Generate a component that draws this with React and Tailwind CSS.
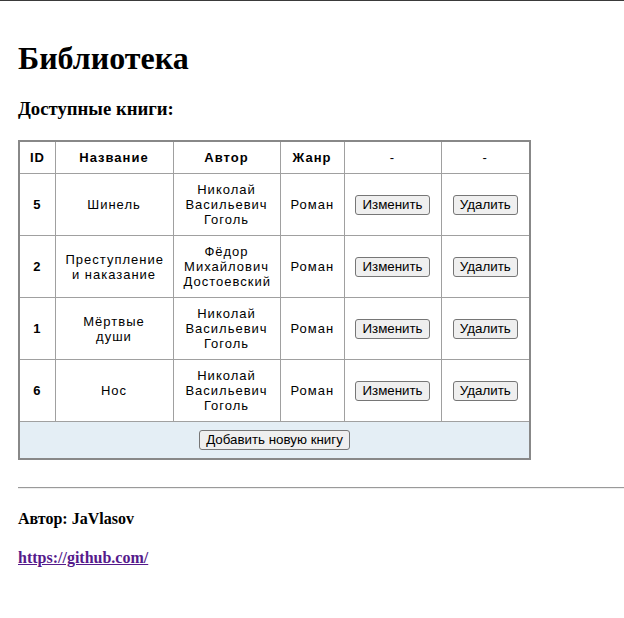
// Library page: title, books table, author footer.
const books = [
    { id: 5, title: 'Шинель', author: 'Николай Васильевич Гоголь', genre: 'Роман' },
    { id: 2, title: 'Преступление и наказание', author: 'Фёдор Михайлович Достоевский', genre: 'Роман' },
    { id: 1, title: 'Мёртвые души', author: 'Николай Васильевич Гоголь', genre: 'Роман' },
    { id: 6, title: 'Нос', author: 'Николай Васильевич Гоголь', genre: 'Роман' },
];

const cell = 'border border-[#a0a0a0] px-[10px] py-[8px] text-center align-middle';
const btn =
    'rounded-[3px] border border-[#767676] bg-[#efefef] px-[6px] py-[1px] font-["Liberation_Sans",Arial,sans-serif] text-[13.33px] leading-[16px] tracking-normal text-black';

function ActionButton({ children }) {
    return (
        <button type="button" className={btn}>
            {children}
        </button>
    );
}

export default function App() {
    return (
        <div className='min-h-[618px] border-t border-[#3a3a3a] bg-white pl-[18px] pt-[18px] font-["Liberation_Serif","Times_New_Roman",serif] text-black'>
            <h1 className="mt-[21px] mb-[21px] text-[32px] font-bold leading-[37px]">
                Библиотека
            </h1>
            <h3 className="mb-[20px] text-[18.72px] font-bold leading-[22px]">
                Доступные книги:
            </h3>

            <table className='w-[511px] table-fixed border-collapse border-2 border-[#888] font-["Liberation_Sans",Arial,sans-serif] text-[13px] leading-[15px] tracking-[1px]'>
                <colgroup>
                    <col className="w-[36px]" />
                    <col className="w-[118px]" />
                    <col className="w-[107px]" />
                    <col className="w-[64px]" />
                    <col className="w-[97px]" />
                    <col className="w-[89px]" />
                </colgroup>
                <thead>
                    <tr>
                        <th className={`${cell} font-bold`}>ID</th>
                        <th className={`${cell} font-bold`}>Название</th>
                        <th className={`${cell} font-bold`}>Автор</th>
                        <th className={`${cell} font-bold`}>Жанр</th>
                        <th className={`${cell} font-normal`}>-</th>
                        <th className={`${cell} font-normal`}>-</th>
                    </tr>
                </thead>
                <tbody>
                    {books.map((book) => (
                        <tr key={book.id}>
                            <td className={`${cell} font-bold`}>{book.id}</td>
                            <td className={cell}>{book.title}</td>
                            <td className={cell}>{book.author}</td>
                            <td className={cell}>{book.genre}</td>
                            <td className={cell}>
                                <ActionButton>Изменить</ActionButton>
                            </td>
                            <td className={cell}>
                                <ActionButton>Удалить</ActionButton>
                            </td>
                        </tr>
                    ))}
                    <tr className="bg-[#e4eef5]">
                        <td colSpan={6} className={cell}>
                            <ActionButton>Добавить новую книгу</ActionButton>
                        </td>
                    </tr>
                </tbody>
            </table>

            <hr className="mt-[27px] border-t border-b border-t-[#9a9a9a] border-b-[#eee]" />

            <h4 className="mt-[21px] text-[16px] font-bold leading-[18px]">
                Автор: JaVlasov
            </h4>
            <h4 className="mt-[21px] text-[16px] font-bold leading-[18px]">
                <a href="#" className="text-[#551a8b] underline">
                    https://github.com/
                </a>
            </h4>
        </div>
    );
}
